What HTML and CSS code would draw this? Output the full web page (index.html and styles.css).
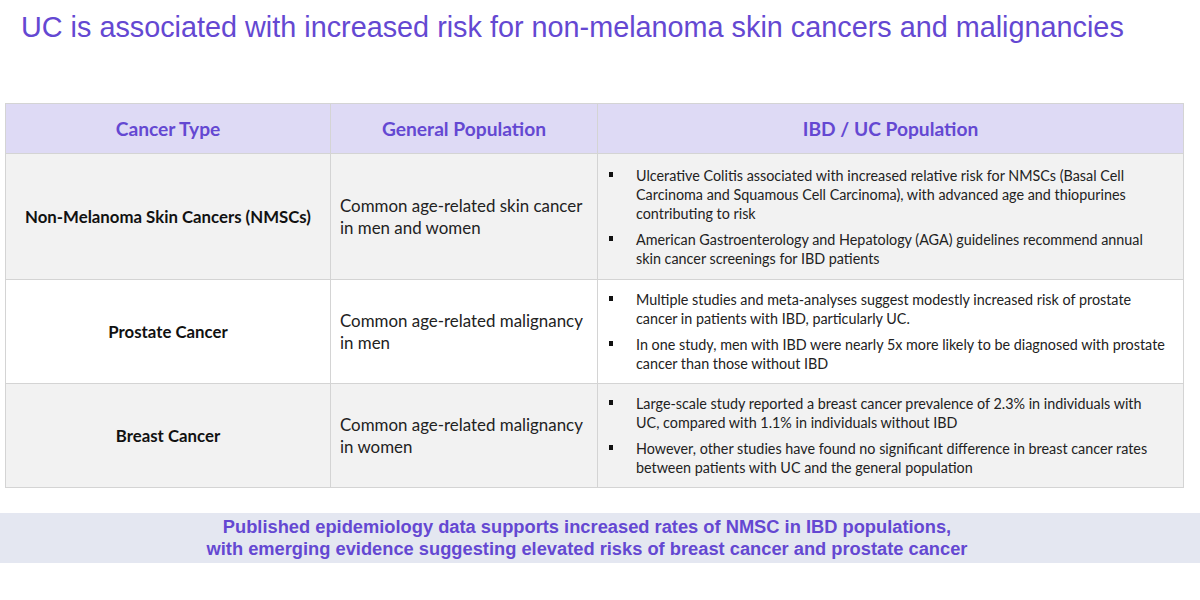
FILE: index.html
```html
<!DOCTYPE html>
<html>
<head>
<meta charset="utf-8">
<link rel="stylesheet" href="styles.css">
</head>
<body>
<h1 class="title">UC is associated with increased risk for non-melanoma skin cancers and malignancies</h1>
<table class="grid">
  <colgroup><col class="c1"><col class="c2"><col class="c3"></colgroup>
  <thead>
    <tr><th>Cancer Type</th><th>General Population</th><th>IBD / UC Population</th></tr>
  </thead>
  <tbody>
    <tr class="r1 shade">
      <td class="type">Non-Melanoma Skin Cancers (NMSCs)</td>
      <td class="gen">Common age-related skin cancer in men and women</td>
      <td class="ibd"><ul>
        <li>Ulcerative Colitis associated with increased relative risk for NMSCs (Basal Cell Carcinoma and Squamous Cell Carcinoma), with advanced age and thiopurines contributing to risk</li>
        <li>American Gastroenterology and Hepatology (AGA) guidelines recommend annual skin cancer screenings for IBD patients</li>
      </ul></td>
    </tr>
    <tr class="r2">
      <td class="type">Prostate Cancer</td>
      <td class="gen">Common age-related malignancy in men</td>
      <td class="ibd"><ul>
        <li>Multiple studies and meta-analyses suggest modestly increased risk of prostate cancer in patients with IBD, particularly UC.</li>
        <li>In one study, men with IBD were nearly 5x more likely to be diagnosed with prostate cancer than those without IBD</li>
      </ul></td>
    </tr>
    <tr class="r3 shade">
      <td class="type">Breast Cancer</td>
      <td class="gen">Common age-related malignancy in women</td>
      <td class="ibd"><ul>
        <li>Large-scale study reported a breast cancer prevalence of 2.3% in individuals with UC, compared with 1.1% in individuals without IBD</li>
        <li>However, other studies have found no significant difference in breast cancer rates between patients with UC and the general population</li>
      </ul></td>
    </tr>
  </tbody>
</table>
<div class="banner">
  <p>Published epidemiology data supports increased rates of NMSC in IBD populations,<br>with emerging evidence suggesting elevated risks of breast cancer and prostate cancer</p>
</div>
</body>
</html>
```

FILE: styles.css
```css
html, body { margin: 0; padding: 0; background: #ffffff; }
body { width: 1200px; height: 600px; overflow: hidden; }

.title {
  margin: 0;
  padding: 11px 0 0 21px;
  height: 39px;
  font-family: "Liberation Sans", Arial, sans-serif;
  font-weight: normal;
  font-size: 28.8px;
  line-height: 33px;
  color: #6448d2;
  white-space: nowrap;
}

.grid {
  margin: 53px 0 0 5px;
  width: 1178px;
  border-collapse: collapse;
  font-family: "Lato", "Open Sans", sans-serif;
  table-layout: fixed;
}
.c1 { width: 325px; }
.c2 { width: 267px; }
.c3 { width: 586px; }

.grid th, .grid td { border: 1px solid #d4d4d4; }

.grid th {
  background: #dedaf5;
  color: #6448d2;
  font-weight: bold;
  font-size: 19.2px;
  height: 49px;
  padding: 0;
}

.shade td { background: #f2f2f2; }
.r1 td { height: 125px; }
.r2 td, .r3 td { height: 103px; }

.type {
  text-align: center;
  font-weight: bold;
  font-size: 16.8px;
  color: #111;
  padding: 0;
}
.gen {
  font-size: 16.9px;
  line-height: 22px;
  color: #222;
  padding: 0 6px 0 9px;
}
.ibd { padding: 0 16.5px 0 0; vertical-align: middle; }
.ibd ul { list-style: none; margin: 0; padding: 0; }
.ibd li {
  position: relative;
  padding-left: 38px;
  font-size: 14.35px;
  line-height: 19px;
  color: #222;
}
.ibd li + li { margin-top: 7px; }
.ibd li::before {
  content: "";
  position: absolute;
  left: 11px;
  top: 6px;
  width: 4px;
  height: 5px;
  background: #111;
}

.banner {
  margin-top: 25px;
  height: 50px;
  background: #e4e7f1;
  display: flex;
  align-items: center;
  justify-content: center;
}
.banner p {
  margin: 0;
  padding-right: 26px;
  text-align: center;
  font-family: "Liberation Sans Narrow", "Liberation Sans", Arial, sans-serif;
  font-weight: bold;
  font-size: 18.3px;
  line-height: 22px;
  color: #6448d2;
}
```
